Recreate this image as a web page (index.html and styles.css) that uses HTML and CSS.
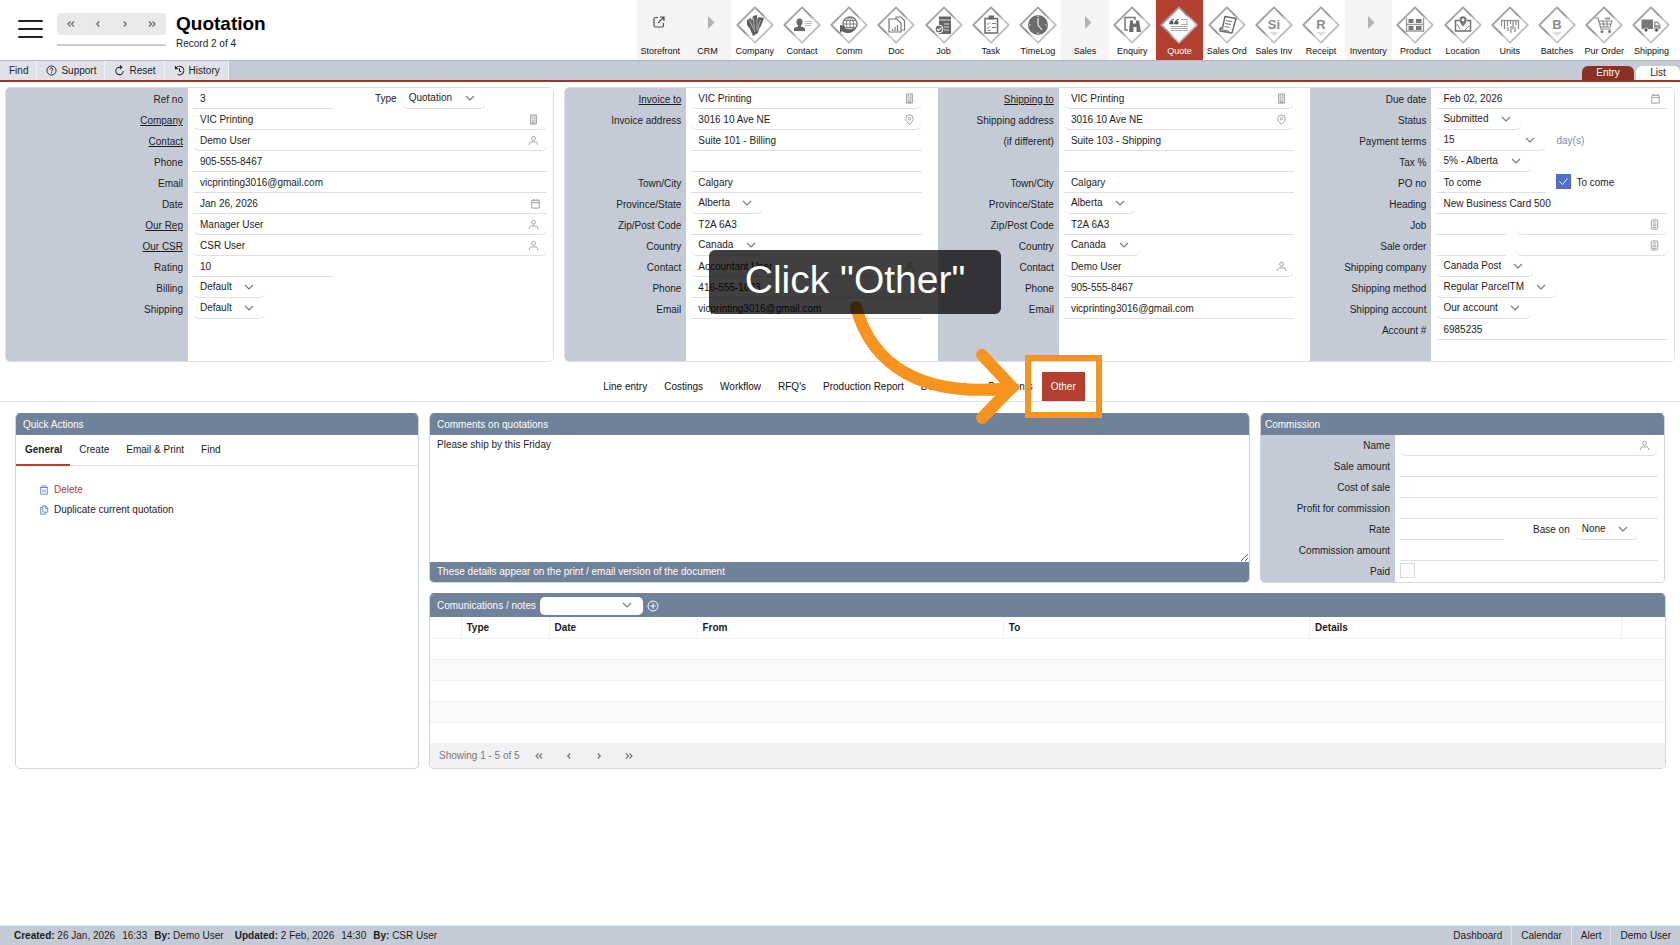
FILE: index.html
```html
<!DOCTYPE html>
<html lang="en">
<head>
<meta charset="utf-8">
<title>Quotation</title>
<link rel="stylesheet" href="styles.css">
</head>
<body>
<svg class="defs" aria-hidden="true">
  <defs>
    <linearGradient id="edge" x1="0" y1="0" x2="1" y2="1">
      <stop offset="0" stop-color="#bdbdbd"/><stop offset=".45" stop-color="#8e8e8e"/><stop offset=".6" stop-color="#cfcfcf"/><stop offset="1" stop-color="#a2a2a2"/>
    </linearGradient>
    <symbol id="diamond" viewBox="0 0 38 38"><path d="M19 1.300 36.700 19 19 36.700 1.300 19Z" fill="#fff" stroke="url(#edge)" stroke-width="1.800" stroke-linejoin="round"/></symbol>
    <symbol id="i-building" viewBox="0 0 12 12"><path d="M2.800 1h6.400v10H2.800z" fill="#e6e6e6" stroke="currentColor"/><path d="M4.500 3h1M6.800 3h1M4.500 5h1M6.800 5h1M4.500 7h1M6.800 7h1M5 11V9h2v2" fill="none" stroke="currentColor"/></symbol>
    <symbol id="i-user" viewBox="0 0 12 12"><circle cx="6" cy="3.600" r="2.100" fill="none" stroke="currentColor"/><path d="M1.500 11V10c0-1.600 1-2.500 2.500-2.500h4c1.500 0 2.500.9 2.500 2.500v1" fill="none" stroke="currentColor"/></symbol>
    <symbol id="i-cal" viewBox="0 0 12 12"><path d="M2 2.500h8v8.500H2zM2 5h8M4 1v2M8 1v2" fill="none" stroke="currentColor"/></symbol>
    <symbol id="i-pin" viewBox="0 0 12 12"><path d="M6 11.300C3.200 9 2 7.200 2 5a4 4 0 0 1 8 0c0 2.200-1.200 4-4 6.300Z" fill="none" stroke="currentColor"/><circle cx="6" cy="5" r="1.300" fill="none" stroke="currentColor"/></symbol>
    <symbol id="i-calc" viewBox="0 0 12 12"><rect x="2.500" y="1" width="7" height="10" rx="1" fill="none" stroke="currentColor"/><path d="M4 3.200h4M4 5.500h4M4 7.300h4M4 9.200h4" stroke="currentColor"/></symbol>
    <symbol id="c-first" viewBox="0 0 12 12"><path d="M5.500 3.500 3 6l2.500 2.500M9 3.500 6.500 6 9 8.500" fill="none" stroke="currentColor" stroke-width="1.200"/></symbol>
    <symbol id="c-prev" viewBox="0 0 12 12"><path d="M7.200 3.500 4.700 6l2.500 2.500" fill="none" stroke="currentColor" stroke-width="1.200"/></symbol>
    <symbol id="c-next" viewBox="0 0 12 12"><path d="M4.800 3.500 7.300 6 4.800 8.500" fill="none" stroke="currentColor" stroke-width="1.200"/></symbol>
    <symbol id="c-last" viewBox="0 0 12 12"><path d="M3 3.500 5.500 6 3 8.500M6.500 3.500 9 6 6.500 8.500" fill="none" stroke="currentColor" stroke-width="1.200"/></symbol>
  </defs>
</svg>

<header class="top">
  <button class="burger" aria-label="Menu"><span></span><span></span><span></span></button>
  <div class="pager-box">
    <div class="pager">
      <button aria-label="First record"><svg><use href="#c-first"/></svg></button>
      <button aria-label="Previous record"><svg><use href="#c-prev"/></svg></button>
      <button aria-label="Next record"><svg><use href="#c-next"/></svg></button>
      <button aria-label="Last record"><svg><use href="#c-last"/></svg></button>
    </div>
    <div class="pager-line"></div>
  </div>
  <div class="title"><h1>Quotation</h1><p>Record 2 of 4</p></div>
  <nav class="modules" aria-label="Modules">
    <a href="#" class="group"><svg viewBox="0 0 38 38"><path d="M17 11.500h-2.500a1.500 1.500 0 0 0-1.500 1.500v6.500a1.500 1.500 0 0 0 1.500 1.500h6.500a1.500 1.500 0 0 0 1.500-1.500V17M17 17l5.500-5.500M19 11h4v4" fill="none" stroke="#4a4a4a" stroke-width="1.200"/></svg>Storefront</a>
    <a href="#" class="group"><svg viewBox="0 0 38 38"><path d="M19 10v13l6.500-6.500z" fill="#b3b3b3"/></svg>CRM</a>
    <a href="#"><svg viewBox="0 0 38 38"><use href="#diamond"/><path d="M11 14l4-2 1 3 1-5 4-1v4l2-2 5 1-3 8-2 3-1 4-5 3-3-7-3-4z" fill="#5f5f5f"/><path d="M17.500 12l1 14M21 13v12M13.500 14l4 9M24.500 14l-3 9" stroke="#c4c4c4" stroke-width=".8" fill="none"/></svg>Company</a>
    <a href="#"><svg viewBox="0 0 38 38"><use href="#diamond"/><ellipse cx="16.500" cy="16" rx="3" ry="3.600" fill="#666"/><path d="M15 18h3v2.500l4 1.500v3H11v-3l4-1.500z" fill="#666"/><path d="M22 15.500h7M22 17.500h7M22 19.500h6" stroke="#bbb"/></svg>Contact</a>
    <a href="#"><svg viewBox="0 0 38 38"><use href="#diamond"/><circle cx="20" cy="18" r="7" fill="#fff" stroke="#777" stroke-width="1.400"/><path d="M20 11v14M13 18h14M14 14.500h12M14 21.500h12M20 11c-5 4-5 10 0 14M20 11c5 4 5 10 0 14" stroke="#777" stroke-width=".9" fill="none"/><path d="M10 19l5 1-1 2c4 2 8 2 12-1-2 6-9 8-14 4l-2 2z" fill="#5f5f5f"/></svg>Comm</a>
    <a href="#"><svg viewBox="0 0 38 38"><use href="#diamond"/><path d="M19 13v-2h5l3.500 3.500V24H25" fill="#fff" stroke="#777" stroke-width="1.200"/><path d="M12 13h8l4 4v9H12z" fill="#fff" stroke="#777" stroke-width="1.200"/><path d="M15.500 25v-2M18 25v-4M20.500 25v-6" stroke="#777" stroke-width="1.200"/></svg>Doc</a>
    <a href="#"><svg viewBox="0 0 38 38"><use href="#diamond"/><path d="M14 10.500h12V28H14z" fill="#656565"/><path d="M14 14h12M19 18h5M19 21h5M19 24h5" stroke="#ddd" stroke-width="1.100"/><circle cx="14" cy="23" r="4" fill="#6a6a6a" stroke="#fff"/><path d="M12 23l1.500 1.500 3-3" stroke="#fff" fill="none" stroke-width="1.200"/></svg>Job</a>
    <a href="#"><svg viewBox="0 0 38 38"><use href="#diamond"/><path d="M13 12.500h12.500V27H13z" fill="#fff" stroke="#686868" stroke-width="1.500"/><path d="M16.500 9.500h5.500v4h-5.500z" fill="#686868"/><path d="M15 17.500l1 1 2-2M15 21.500l1 1 2-2M20 17.500h4M20 21.500h4M15.500 24.500h3" fill="none" stroke="#777"/></svg>Task</a>
    <a href="#"><svg viewBox="0 0 38 38"><use href="#diamond"/><circle cx="19" cy="19" r="10" fill="#6c6c6c"/><path d="M19 12v7l4 5M19 9.500v1.500M28 19h-1.500M10 19h1.500M19 28v-1.500" stroke="#eee" stroke-width="1.200" fill="none"/></svg>TimeLog</a>
    <a href="#" class="group"><svg viewBox="0 0 38 38"><path d="M19 10v13l6.500-6.500z" fill="#b3b3b3"/></svg>Sales</a>
    <a href="#"><svg viewBox="0 0 38 38"><use href="#diamond"/><path d="M15 24h-3V11.500h10V14" fill="none" stroke="#777" stroke-width="1.500"/><path d="M17 14.500h3v3h3v-3h3L28 26h-4.500v-5h-3v5H16z" fill="#6d6d6d"/></svg>Enquiry</a>
    <a href="#" class="current"><svg viewBox="0 0 38 38"><use href="#diamond"/><path d="M13.500 13c-3 1-4 3-4 5h3.500v-2.500h-1.500c0-1 1-2 2-2zM18.500 13c-3 1-4 3-4 5H18v-2.500h-1.500c0-1 1-2 2-2z" fill="#555" stroke="#555" stroke-width=".7"/><path d="M21 13.500h6v5h-6M11 20.500h17M11 22.500h17M11 24.500h17" stroke="#aaa" fill="none" stroke-width="1.100"/></svg>Quote</a>
    <a href="#"><svg viewBox="0 0 38 38"><use href="#diamond"/><path d="M17 10.500l11 2-4 14.500-12-2 .5-3h2z" fill="#fff" stroke="#686868" stroke-width="1.400" stroke-linejoin="round"/><path d="M18 14.500l6 1M17 17.500l6 1M16.500 20.500l5 1M11 23l9 2 1 2" fill="none" stroke="#777" stroke-width="1.100"/></svg>Sales Ord</a>
    <a href="#"><svg viewBox="0 0 38 38"><use href="#diamond"/><path d="M14 26h10l-5 4z" fill="#ddd"/><text x="19" y="23" class="glyph">Si</text></svg>Sales Inv</a>
    <a href="#"><svg viewBox="0 0 38 38"><use href="#diamond"/><path d="M14 26h10l-5 4z" fill="#ddd"/><text x="19" y="23" class="glyph">R</text></svg>Receipt</a>
    <a href="#" class="group"><svg viewBox="0 0 38 38"><path d="M19 10v13l6.500-6.500z" fill="#b3b3b3"/></svg>Inventory</a>
    <a href="#"><svg viewBox="0 0 38 38"><use href="#diamond"/><path d="M10.500 12v14M27.500 12v14M10 18.500h18M10 25h18" stroke="#999" stroke-width="1.300"/><path d="M12.500 13h5v4h-5zM20 13h5.500v4H20zM12.500 20h5v4h-5zM20 20h5.500v4H20z" fill="#777"/></svg>Product</a>
    <a href="#"><svg viewBox="0 0 38 38"><use href="#diamond"/><path d="M15 14.500h-3.500V25h15V14.500H23" fill="none" stroke="#6f6f6f" stroke-width="1.500"/><path d="M19 20.500c-3-3.500-3.700-5-3.700-6.500a3.700 3.700 0 0 1 7.400 0c0 1.500-.7 3-3.700 6.500z" fill="#777"/><circle cx="19" cy="14" r="1.400" fill="#fff"/><path d="M13 18l3 5M21 24l4-4" stroke="#888"/></svg>Location</a>
    <a href="#"><svg viewBox="0 0 38 38"><use href="#diamond"/><path d="M10 14.500h18" stroke="#999" stroke-width="1.300"/><path d="M10.500 14v6M13.500 14v9M16.500 14v6M19.500 14v4M22 14v9M25 14v5M27.500 14v9M17 21v4M20 20v7M24 21v5" stroke="#888" stroke-width="1.200"/></svg>Units</a>
    <a href="#"><svg viewBox="0 0 38 38"><use href="#diamond"/><path d="M14 26h10l-5 4z" fill="#ddd"/><text x="19" y="23" class="glyph">B</text></svg>Batches</a>
    <a href="#"><svg viewBox="0 0 38 38"><use href="#diamond"/><path d="M10 12h3l3 11h10M14 15h13l-2 6H16M18 15l1 6M22 15v6M14.500 18h11" fill="none" stroke="#8a8a8a" stroke-width="1.200"/><path d="M20 12.500h5" stroke="#999" stroke-width="2"/><circle cx="17" cy="25.500" r="1.500" fill="#777"/><circle cx="24.500" cy="25.500" r="1.500" fill="#777"/></svg>Pur Order</a>
    <a href="#"><svg viewBox="0 0 38 38"><use href="#diamond"/><path d="M9.500 13.500H21V23H9.500z" fill="#777"/><path d="M22 15.500h4l2.500 3.500v4H22z" fill="#999"/><path d="M23.500 17h2l1.500 2h-3.500z" fill="#fff"/><circle cx="14" cy="24" r="2" fill="#555" stroke="#fff" stroke-width=".7"/><circle cx="24.500" cy="24" r="2" fill="#555" stroke="#fff" stroke-width=".7"/></svg>Shipping</a>
  </nav>
</header>

<div class="toolbar">
  <button>Find</button>
  <button><svg viewBox="0 0 12 12"><circle cx="6" cy="6" r="5" fill="none" stroke="currentColor"/><path d="M4.500 4.800C4.500 3.800 5.200 3.200 6 3.200s1.600.5 1.600 1.400C7.600 5.700 6 5.800 6 7M6 8v1" fill="none" stroke="currentColor"/></svg>Support</button>
  <button><svg viewBox="0 0 12 12"><path d="M10 6.500A4 4 0 1 1 6 2.500h2.500M6.500.5l2 2-2 2" fill="none" stroke="currentColor" stroke-width="1.100"/></svg>Reset</button>
  <button><svg viewBox="0 0 12 12"><path d="M1.500 1v3h3M1.800 4A4.700 4.700 0 1 1 4 10.300M6 3.500v3l2 1" fill="none" stroke="currentColor" stroke-width="1.100"/></svg>History</button>
  <div class="views">
    <a href="#" class="on">Entry</a>
    <a href="#">List</a>
  </div>
</div>

<main>
  <section class="record">
    <div class="panel main-panel">
      <div class="col">
        <div class="row"><label for="ref">Ref no</label><div class="cell"><input id="ref" class="w-mid" value="3"><label class="side type" for="type">Type</label><select id="type"><option>Quotation</option></select></div></div>
        <div class="row"><label for="company"><a href="#">Company</a></label><div class="cell look"><input id="company" value="VIC Printing"><svg><use href="#i-building"/></svg></div></div>
        <div class="row"><label for="contact"><a href="#">Contact</a></label><div class="cell look"><input id="contact" value="Demo User"><svg><use href="#i-user"/></svg></div></div>
        <div class="row"><label for="phone">Phone</label><div class="cell"><input id="phone" value="905-555-8467"></div></div>
        <div class="row"><label for="email">Email</label><div class="cell"><input id="email" value="vicprinting3016@gmail.com"></div></div>
        <div class="row"><label for="date">Date</label><div class="cell date"><input id="date" value="Jan 26, 2026"><svg><use href="#i-cal"/></svg></div></div>
        <div class="row"><label for="rep"><a href="#">Our Rep</a></label><div class="cell look"><input id="rep" value="Manager User"><svg><use href="#i-user"/></svg></div></div>
        <div class="row"><label for="csr"><a href="#">Our CSR</a></label><div class="cell look"><input id="csr" value="CSR User"><svg><use href="#i-user"/></svg></div></div>
        <div class="row"><label for="rating">Rating</label><div class="cell"><input id="rating" class="w-mid" value="10"></div></div>
        <div class="row"><label for="billing">Billing</label><div class="cell"><select id="billing"><option>Default</option></select></div></div>
        <div class="row"><label for="ship">Shipping</label><div class="cell"><select id="ship"><option>Default</option></select></div></div>
      </div>
    </div>

    <div class="panel addresses">
      <div class="col">
        <div class="row"><label for="i-to"><a href="#">Invoice to</a></label><div class="cell look"><input id="i-to" value="VIC Printing"><svg><use href="#i-building"/></svg></div></div>
        <div class="row"><label for="i-a1">Invoice address</label><div class="cell look"><input id="i-a1" value="3016 10 Ave NE"><svg><use href="#i-pin"/></svg></div></div>
        <div class="row"><span class="blank"></span><div class="cell"><input aria-label="Invoice address line 2" value="Suite 101 - Billing"></div></div>
        <div class="row"><span class="blank"></span><div class="cell"><input aria-label="Invoice address line 3"></div></div>
        <div class="row"><label for="i-town">Town/City</label><div class="cell"><input id="i-town" value="Calgary"></div></div>
        <div class="row"><label for="i-prov">Province/State</label><div class="cell"><select id="i-prov"><option>Alberta</option></select></div></div>
        <div class="row"><label for="i-zip">Zip/Post Code</label><div class="cell"><input id="i-zip" value="T2A 6A3"></div></div>
        <div class="row"><label for="i-country">Country</label><div class="cell"><select id="i-country"><option>Canada</option></select></div></div>
        <div class="row"><label for="i-contact">Contact</label><div class="cell look"><input id="i-contact" value="Accountant User"><svg><use href="#i-user"/></svg></div></div>
        <div class="row"><label for="i-phone">Phone</label><div class="cell"><input id="i-phone" value="416-555-1023"></div></div>
        <div class="row"><label for="i-email">Email</label><div class="cell"><input id="i-email" value="vicprinting3016@gmail.com"></div></div>
      </div>
      <div class="col">
        <div class="row"><label for="s-to"><a href="#">Shipping to</a></label><div class="cell look"><input id="s-to" value="VIC Printing"><svg><use href="#i-building"/></svg></div></div>
        <div class="row"><label for="s-a1">Shipping address</label><div class="cell look"><input id="s-a1" value="3016 10 Ave NE"><svg><use href="#i-pin"/></svg></div></div>
        <div class="row"><label for="s-a2">(if different)</label><div class="cell"><input id="s-a2" value="Suite 103 - Shipping"></div></div>
        <div class="row"><span class="blank"></span><div class="cell"><input aria-label="Shipping address line 3"></div></div>
        <div class="row"><label for="s-town">Town/City</label><div class="cell"><input id="s-town" value="Calgary"></div></div>
        <div class="row"><label for="s-prov">Province/State</label><div class="cell"><select id="s-prov"><option>Alberta</option></select></div></div>
        <div class="row"><label for="s-zip">Zip/Post Code</label><div class="cell"><input id="s-zip" value="T2A 6A3"></div></div>
        <div class="row"><label for="s-country">Country</label><div class="cell"><select id="s-country"><option>Canada</option></select></div></div>
        <div class="row"><label for="s-contact">Contact</label><div class="cell look"><input id="s-contact" value="Demo User"><svg><use href="#i-user"/></svg></div></div>
        <div class="row"><label for="s-phone">Phone</label><div class="cell"><input id="s-phone" value="905-555-8467"></div></div>
        <div class="row"><label for="s-email">Email</label><div class="cell"><input id="s-email" value="vicprinting3016@gmail.com"></div></div>
      </div>
      <div class="col last">
        <div class="row"><label for="due">Due date</label><div class="cell date"><input id="due" value="Feb 02, 2026"><svg><use href="#i-cal"/></svg></div></div>
        <div class="row"><label for="status">Status</label><div class="cell"><select id="status"><option>Submitted</option></select></div></div>
        <div class="row"><label for="terms">Payment terms</label><div class="cell"><select id="terms" class="w-short"><option>15</option></select><span class="unit">day(s)</span></div></div>
        <div class="row"><label for="tax">Tax %</label><div class="cell"><select id="tax"><option>5% - Alberta</option></select></div></div>
        <div class="row"><label for="po">PO no</label><div class="cell"><input id="po" class="w-short" value="To come"><input type="checkbox" id="tocome" checked><label class="side" for="tocome">To come</label></div></div>
        <div class="row"><label for="heading">Heading</label><div class="cell"><input id="heading" value="New Business Card 500"></div></div>
        <div class="row"><label for="job">Job</label><div class="cell pair"><input id="job" class="w-code"><span class="cell look"><input aria-label="Job name"><svg><use href="#i-calc"/></svg></span></div></div>
        <div class="row"><label for="so">Sale order</label><div class="cell pair"><input id="so" class="w-code"><span class="cell look"><input aria-label="Sale order name"><svg><use href="#i-calc"/></svg></span></div></div>
        <div class="row"><label for="carrier">Shipping company</label><div class="cell"><select id="carrier"><option>Canada Post</option></select></div></div>
        <div class="row"><label for="method">Shipping method</label><div class="cell"><select id="method"><option>Regular ParcelTM</option></select></div></div>
        <div class="row"><label for="account">Shipping account</label><div class="cell"><select id="account"><option>Our account</option></select></div></div>
        <div class="row"><label for="accno">Account #</label><div class="cell"><input id="accno" value="6985235"></div></div>
      </div>
    </div>
  </section>

  <nav class="tabs" aria-label="Quotation sections">
    <a href="#">Line entry</a><a href="#">Costings</a><a href="#">Workflow</a><a href="#">RFQ's</a><a href="#">Production Report</a><a href="#">Documents</a><a href="#">Payments</a><a href="#" class="on">Other<span class="focus-frame"></span></a>
  </nav>

  <section class="cards">
    <div class="card quick">
      <h2>Quick Actions</h2>
      <div class="subtabs"><button class="on">General</button><button>Create</button><button>Email &amp; Print</button><button>Find</button></div>
      <ul>
        <li><a href="#" class="danger"><svg viewBox="0 0 12 12"><path d="M1 3h10M3.500 3V1h5v2M2 3v8h8V3M4.700 5.500v3.500M7.300 5.500v3.500" fill="none" stroke="#5b74cf" /></svg>Delete</a></li>
        <li><a href="#"><svg viewBox="0 0 12 12"><path d="M4.500 1H8l2.500 2.500V8.500h-6zM7.500 1v3h3M4.500 3H2v8h6V8.500" fill="none" stroke="#5b74cf" stroke-linejoin="round"/></svg>Duplicate current quotation</a></li>
      </ul>
    </div>
    <div class="stack">
      <div class="upper">
        <div class="card comments">
          <h2><label for="comments">Comments on quotations</label></h2>
          <textarea id="comments">Please ship by this Friday</textarea>
          <p class="note">These details appear on the print / email version of the document</p>
        </div>
        <div class="card commission">
          <h2>Commission</h2>
          <div class="col">
            <div class="row"><label for="c-name">Name</label><div class="cell look"><input id="c-name"><svg><use href="#i-user"/></svg></div></div>
            <div class="row"><label for="c-sale">Sale amount</label><div class="cell"><input id="c-sale"></div></div>
            <div class="row"><label for="c-cost">Cost of sale</label><div class="cell"><input id="c-cost"></div></div>
            <div class="row"><label for="c-profit">Profit for commission</label><div class="cell"><input id="c-profit"></div></div>
            <div class="row"><label for="c-rate">Rate</label><div class="cell"><input id="c-rate" class="w-rate"><label class="side base" for="c-base">Base on</label><select id="c-base"><option>None</option></select></div></div>
            <div class="row"><label for="c-amt">Commission amount</label><div class="cell"><input id="c-amt"></div></div>
            <div class="row"><label for="c-paid">Paid</label><div class="cell"><input type="checkbox" id="c-paid"></div></div>
          </div>
        </div>
      </div>
      <div class="card comms">
        <h2><label for="ctype">Comunications / notes</label><select id="ctype"><option></option></select><button class="add" aria-label="Add"><svg viewBox="0 0 12 12"><circle cx="6" cy="6" r="5" fill="none" stroke="#fff"/><path d="M6 3.300v5.400M3.300 6h5.400" stroke="#fff"/></svg></button></h2>
        <table>
          <colgroup><col class="k0"><col class="k1"><col class="k2"><col class="k3"><col class="k3"><col class="k5"><col class="k6"></colgroup>
          <thead><tr><th></th><th>Type</th><th>Date</th><th>From</th><th>To</th><th>Details</th><th></th></tr></thead>
          <tbody>
            <tr><td colspan="7"></td></tr><tr><td colspan="7"></td></tr><tr><td colspan="7"></td></tr><tr><td colspan="7"></td></tr><tr><td colspan="7"></td></tr>
          </tbody>
        </table>
        <div class="paging"><span>Showing 1 - 5 of 5</span>
          <button aria-label="First page"><svg><use href="#c-first"/></svg></button>
          <button aria-label="Previous page"><svg><use href="#c-prev"/></svg></button>
          <button aria-label="Next page"><svg><use href="#c-next"/></svg></button>
          <button aria-label="Last page"><svg><use href="#c-last"/></svg></button>
        </div>
      </div>
    </div>
  </section>
</main>

<footer>
  <span><b>Created:</b> 26 Jan, 2026</span><span>16:33</span><span><b>By:</b> Demo User</span><span class="upd"><b>Updated:</b> 2 Feb, 2026</span><span>14:30</span><span><b>By:</b> CSR User</span>
  <nav aria-label="Status"><a href="#">Dashboard</a><a href="#">Calendar</a><a href="#">Alert</a><a href="#">Demo User</a></nav>
</footer>

<div class="coach">
  <svg class="arrow" viewBox="0 0 180 130"><path d="M16 15C32 74 82 106 172 96M142 63l30 32-30 31" fill="none" stroke="#f7941d" stroke-width="12" stroke-linecap="round"/></svg>
  <div class="bubble">Click "Other"</div>
</div>
</body>
</html>
```
FILE: styles.css
```css
* { box-sizing: border-box; }
body {
  margin: 0;
  min-height: 100vh;
  display: flex;
  flex-direction: column;
  position: relative;
  background: #fff;
  color: #1c1c1c;
  font: 10px/12px "Liberation Sans", Arial, sans-serif;
}
a { color: inherit; text-decoration: none; }
h1, h2, p, ul { margin: 0; padding: 0; }
button, input, select, textarea { font: inherit; color: inherit; margin: 0; }
button { background: none; border: 0; padding: 0; }
.defs { position: absolute; width: 0; height: 0; }

/* header */
.top { display: flex; height: 61px; border-bottom: 1px solid #b4b6ba; }
.burger { display: flex; flex-direction: column; gap: 6px; padding: 20px 0 0 18px; }
.burger span { display: block; width: 25px; height: 2px; border-radius: 1px; background: #222; }
.pager-box { width: 109px; margin: 13px 0 0 14px; }
.pager { display: flex; height: 22px; border-radius: 4px; background: #e9e9e9; }
.pager button { flex: 1; color: #666; }
.pager svg, .paging svg { width: 12px; height: 12px; display: block; margin: auto; }
.pager-line { height: 2px; margin-top: 9px; background: #c5cbd6; }
.title { padding: 13px 0 0 10px; }
.title h1 { font-size: 19px; line-height: 22px; color: #000; }
.title p { margin-top: 3px; }
.modules { flex: 0 0 61.8%; display: grid; grid-template-columns: repeat(22, 1fr); margin: 0 5px 0 auto; }
.modules a { display: flex; flex-direction: column; align-items: center; padding-top: 6px; font-size: 9px; line-height: 10px; white-space: nowrap; color: #111; }
.modules svg { width: 38px; height: 38px; margin-bottom: 2px; }
.modules .group { background: #f4f4f4; }
.modules .current { background: #b23f2f; color: #fff; }
.glyph { font: bold 13px "Liberation Sans", Arial, sans-serif; fill: #8c8c8c; text-anchor: middle; }

/* toolbar */
.toolbar { display: flex; height: 21px; background: #c5cbd6; border-bottom: 2px solid #94392b; }
.toolbar button { display: flex; align-items: center; gap: 4px; padding: 0 8px 0 9px; background: #dfe3e9; border-right: 1px solid #eceff3; }
.toolbar svg { width: 11px; height: 11px; }
.views { margin-left: auto; display: flex; gap: 2px; align-items: flex-end; }
.views a { width: 52px; height: 14px; line-height: 14px; text-align: center; background: #fff; border-radius: 6px 6px 0 0; }
.views a:last-child { width: 44px; }
.views .on { background: #8c2f24; color: #fff; }

/* record panels */
.record { display: grid; grid-template-columns: 549fr 1110fr; gap: 10px; padding: 5px 5px 0; }
.panel { border: 1px solid #d9dfe8; border-radius: 5px; overflow: hidden; }
.addresses { display: grid; grid-template-columns: 373fr 373fr 364fr; }
.col { --label: 121px; padding-bottom: 21px; background: linear-gradient(to right, #c5cbd6 var(--label), #fff var(--label)); }
.main-panel .col { --label: 182px; height: 100%; }
.row { display: flex; height: 21px; }
.row > label, .blank { flex: 0 0 var(--label); padding: 6px 5px 0 0; text-align: right; }
.row > label a { text-decoration: underline; }
.cell { flex: 1; display: flex; min-width: 0; height: 21px; position: relative; padding: 0 16px 0 5px; }
.main-panel .cell, .last .cell, .commission .cell { padding-right: 6px; }
.cell input:not([type]) { flex: 1; min-width: 0; width: 100%; height: 21px; padding: 0 7px; border: 0; border-bottom: 1px solid #dfe0e3; background: transparent; }
.look input:not([type]), .row select { border-bottom-left-radius: 6px !important; border-bottom-right-radius: 6px !important; }
.cell > svg { position: absolute; right: 23px; top: 5px; width: 11px; height: 11px; color: #999; pointer-events: none; }
.main-panel .look > svg, .commission .cell > svg { right: 14px; }
.cell.date > svg { right: 13px; }
.main-panel .date > svg { right: 12px; }
select {
  appearance: none;
  height: 21px;
  padding: 0 33px 0 7px;
  border: 0;
  border-bottom: 1px solid #dfe0e3;
  border-radius: 0;
  background: no-repeat right 11px center / 10px 7px url("data:image/svg+xml,%3Csvg xmlns='http://www.w3.org/2000/svg' viewBox='0 0 10 7'%3E%3Cpath d='M1 1l4 4 4-4' fill='none' stroke='%23777' stroke-width='1.100'/%3E%3C/svg%3E");
}
.cell input.w-mid { flex: 0 0 140px; }
.cell input.w-short, .cell select.w-short { flex: 0 0 110px; }
.cell input.w-code { flex: 0 0 70px; }
.cell input.w-rate { flex: 0 0 104px; }
.side { padding: 5px 5px 0; }
.side.type { padding-left: 42px; }
.side.base { padding-left: 29px; }
.unit { padding: 5px 0 0 10px; color: #7d8bab; }
.last .pair .cell { padding: 0 0 0 10px; }
.last .pair .cell > svg { right: 8px; }
input[type="checkbox"] { appearance: none; width: 15px; height: 15px; margin: 2px 0 0; border: 1px solid #d9d9d9; background: #fff; }
#tocome { margin-left: 10px; }
input[type="checkbox"]:checked { border-color: #4f6fd0; background: #4f6fd0 no-repeat center / 11px 9px url("data:image/svg+xml,%3Csvg xmlns='http://www.w3.org/2000/svg' viewBox='0 0 11 9'%3E%3Cpath d='M1.500 4.500l3 3L9.500 1.500' fill='none' stroke='white'/%3E%3C/svg%3E"); }

/* section tabs */
.tabs { display: flex; justify-content: center; padding-top: 10px; border-bottom: 1px solid #e2e2e4; }
.tabs a { position: relative; padding: 0 9px 0 8px; line-height: 29px; color: #111; }
.tabs .on { padding-left: 9px; background: #b23f2f; color: #fff; }
.focus-frame { position: absolute; inset: -17px; border: 6px solid #f7941d; }

/* cards */
.cards { display: grid; grid-template-columns: 404fr 1237fr; gap: 10px; padding: 11px 14px 0 15px; }
.card { border: 1px solid #cfd6e0; border-radius: 5px; overflow: hidden; display: flex; flex-direction: column; }
.card h2 { display: flex; align-items: center; height: 21px; padding: 0 7px; background: #70819a; color: #fff; font-size: 10px; font-weight: normal; }
.card { border-top-color: #70819a; }
.stack { display: flex; flex-direction: column; gap: 10px; }
.upper { display: grid; grid-template-columns: 821fr 405fr; gap: 10px; padding-right: 1px; }
.subtabs { display: flex; height: 31px; border-bottom: 1px solid #e2e2e4; }
.subtabs button { height: 31px; padding: 0 8px 0 9px; border-bottom: 2px solid transparent; }
.subtabs .on { border-color: #b8402f; font-weight: bold; }
.quick ul { list-style: none; padding: 14px 23px; }
.quick li a { display: flex; align-items: center; gap: 5px; height: 20px; }
.quick li svg { width: 10px; height: 10px; }
.danger { color: #b23f2f; }
.comments textarea { flex: 1; width: 100%; padding: 4px 7px; border: 0; resize: vertical; display: block; }
.note { padding: 4px 7px; background: #70819a; color: #fff; }
.commission h2 { padding: 0 4px; }
.commission .col { --label: 134px; padding-bottom: 0; }
.commission .row > label:first-child { padding-top: 5px; }
.comms h2 { height: 23px; }
.comms h2 select { width: 103px; height: 18px; margin-left: 4px; border: 0; border-radius: 5px; background-color: #fff; }
.add { margin-left: 4px; }
.add svg { display: block; width: 12px; height: 12px; }
table { width: 100%; border-collapse: collapse; table-layout: fixed; }
.k0 { width: 31px; } .k1 { width: 88px; } .k2 { width: 148px; } .k3 { width: 24.8%; } .k6 { width: 44px; }
th { height: 21px; padding: 1px 5px 0; text-align: left; border-right: 1px solid #f0f0f0; }
th:last-child { border-right: 0; }
td { height: 21px; padding: 0; border-top: 1px solid #f1f1f1; }
tbody tr:nth-child(even) { background: #fafafa; }
.paging { display: flex; align-items: center; height: 25px; padding: 0 9px; background: #eff1f3; color: #777; }
.paging span { margin-right: 4px; }
.paging button { width: 30px; }

/* status bar */
footer { margin-top: auto; display: flex; height: 20px; padding-left: 14px; line-height: 20px; background: #c5cbd6; border-top: 1px solid #e4e7ec; }
footer > span { margin-right: 7px; white-space: nowrap; }
footer .upd { margin-left: 4px; }
footer nav { margin-left: auto; display: flex; }
footer nav a { padding: 0 9px; border-left: 1px solid #dde1e8; }
footer nav a:first-child { border: 0; }

/* walkthrough callout */
.coach { position: absolute; top: 250px; left: 50%; pointer-events: none; }
.bubble { position: absolute; top: 0; left: -131px; width: 292px; height: 64px; border-radius: 6px; background: rgba(0, 0, 0, .75); color: #fff; font: 39px/60px "Liberation Sans", Arial, sans-serif; text-align: center; white-space: nowrap; }
.arrow { position: absolute; top: 40px; left: 0; width: 180px; height: 134px; overflow: visible; }
```
